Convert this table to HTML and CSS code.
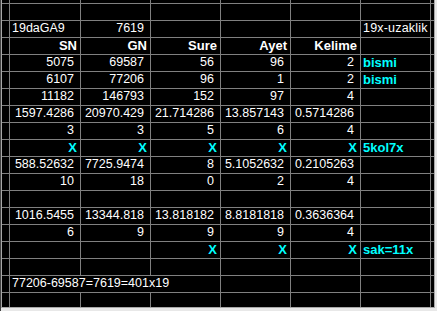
FILE: index.html
```html
<!DOCTYPE html>
<html>
<head>
<meta charset="utf-8">
<link rel="stylesheet" href="styles.css">
</head>
<body>
<div class="frame">
  <div class="sheet">
    <div class="row top"><div></div><div></div><div></div><div></div><div></div><div></div><div></div><div></div></div>
    <div class="row"><div></div><div></div><div></div><div></div><div></div><div></div><div></div><div></div></div>
    <div class="row"><div></div><div class="l">19daGA9</div><div class="n">7619</div><div></div><div></div><div></div><div class="l wide">19x-uzaklik</div><div></div></div>
    <div class="row"><div></div><div class="h">SN</div><div class="h">GN</div><div class="h">Sure</div><div class="h">Ayet</div><div class="h">Kelime</div><div></div><div></div></div>
    <div class="row"><div></div><div class="n">5075</div><div class="n">69587</div><div class="n">56</div><div class="n">96</div><div class="n">2</div><div class="c">bismi</div><div></div></div>
    <div class="row"><div></div><div class="n">6107</div><div class="n">77206</div><div class="n">96</div><div class="n">1</div><div class="n">2</div><div class="c">bismi</div><div></div></div>
    <div class="row"><div></div><div class="n">11182</div><div class="n">146793</div><div class="n">152</div><div class="n">97</div><div class="n">4</div><div></div><div></div></div>
    <div class="row"><div></div><div class="n">1597.4286</div><div class="n">20970.429</div><div class="n">21.714286</div><div class="n">13.857143</div><div class="n">0.5714286</div><div></div><div></div></div>
    <div class="row"><div></div><div class="n">3</div><div class="n">3</div><div class="n">5</div><div class="n">6</div><div class="n">4</div><div></div><div></div></div>
    <div class="row"><div></div><div class="x">X</div><div class="x">X</div><div class="x">X</div><div class="x">X</div><div class="x">X</div><div class="c">5kol7x</div><div></div></div>
    <div class="row"><div></div><div class="n">588.52632</div><div class="n">7725.9474</div><div class="n">8</div><div class="n">5.1052632</div><div class="n">0.2105263</div><div></div><div></div></div>
    <div class="row"><div></div><div class="n">10</div><div class="n">18</div><div class="n">0</div><div class="n">2</div><div class="n">4</div><div></div><div></div></div>
    <div class="row"><div></div><div></div><div></div><div></div><div></div><div></div><div></div><div></div></div>
    <div class="row"><div></div><div class="n">1016.5455</div><div class="n">13344.818</div><div class="n">13.818182</div><div class="n">8.8181818</div><div class="n">0.3636364</div><div></div><div></div></div>
    <div class="row"><div></div><div class="n">6</div><div class="n">9</div><div class="n">9</div><div class="n">9</div><div class="n">4</div><div></div><div></div></div>
    <div class="row"><div></div><div></div><div></div><div class="x">X</div><div class="x">X</div><div class="x">X</div><div class="c">sak=11x</div><div></div></div>
    <div class="row"><div></div><div></div><div></div><div></div><div></div><div></div><div></div><div></div></div>
    <div class="row"><div></div><div class="l span3">77206-69587=7619=401x19</div><div></div><div></div><div></div><div></div></div>
    <div class="row last"><div></div><div></div><div></div><div></div><div></div><div></div><div></div><div></div></div>
  </div>
</div>
</body>
</html>
```
FILE: styles.css
```css
html, body {
  margin: 0;
  padding: 0;
  background: #e8e8e8;
}
.frame {
  width: 437px;
  height: 311px;
  box-sizing: border-box;
  border-left: 1px solid #404040;
  background: #e8e8e8;
  overflow: hidden;
}
.sheet {
  width: 434px;
  height: 308px;
  box-sizing: border-box;
  border-left: 1px solid #a8a8a8;
  border-right: 1px solid #a8a8a8;
  border-bottom: 1px solid #a8a8a8;
  background: #808080;
  display: flex;
  flex-direction: column;
  gap: 1px;
  font-family: "Liberation Sans", Arial, sans-serif;
  font-size: 12.5px;
  color: #ffffff;
}
.row {
  display: grid;
  grid-template-columns: 7px 70px 69px 69px 69px 69px 69px 3px;
  gap: 1px;
  height: 16px;
}
.row.top { height: 3px; }
.row.last { height: 14px; }
.row > div {
  background: #000;
  line-height: 15px;
  white-space: nowrap;
  overflow: hidden;
}
.row > .l {
  text-align: left;
  padding-left: 2px;
}
.row > .wide {
  letter-spacing: 0.2px;
}
.row > .span3 {
  grid-column: span 3;
}
.row > .n {
  text-align: right;
  padding-right: 6px;
}
.row > .h {
  text-align: right;
  padding-right: 3px;
  font-weight: bold;
  font-size: 13px;
}
.row > .x {
  text-align: right;
  padding-right: 3px;
  font-weight: bold;
  font-size: 13px;
  color: #00ffff;
}
.row > .c {
  text-align: left;
  padding-left: 2px;
  font-weight: bold;
  font-size: 13px;
  color: #00ffff;
}
```
